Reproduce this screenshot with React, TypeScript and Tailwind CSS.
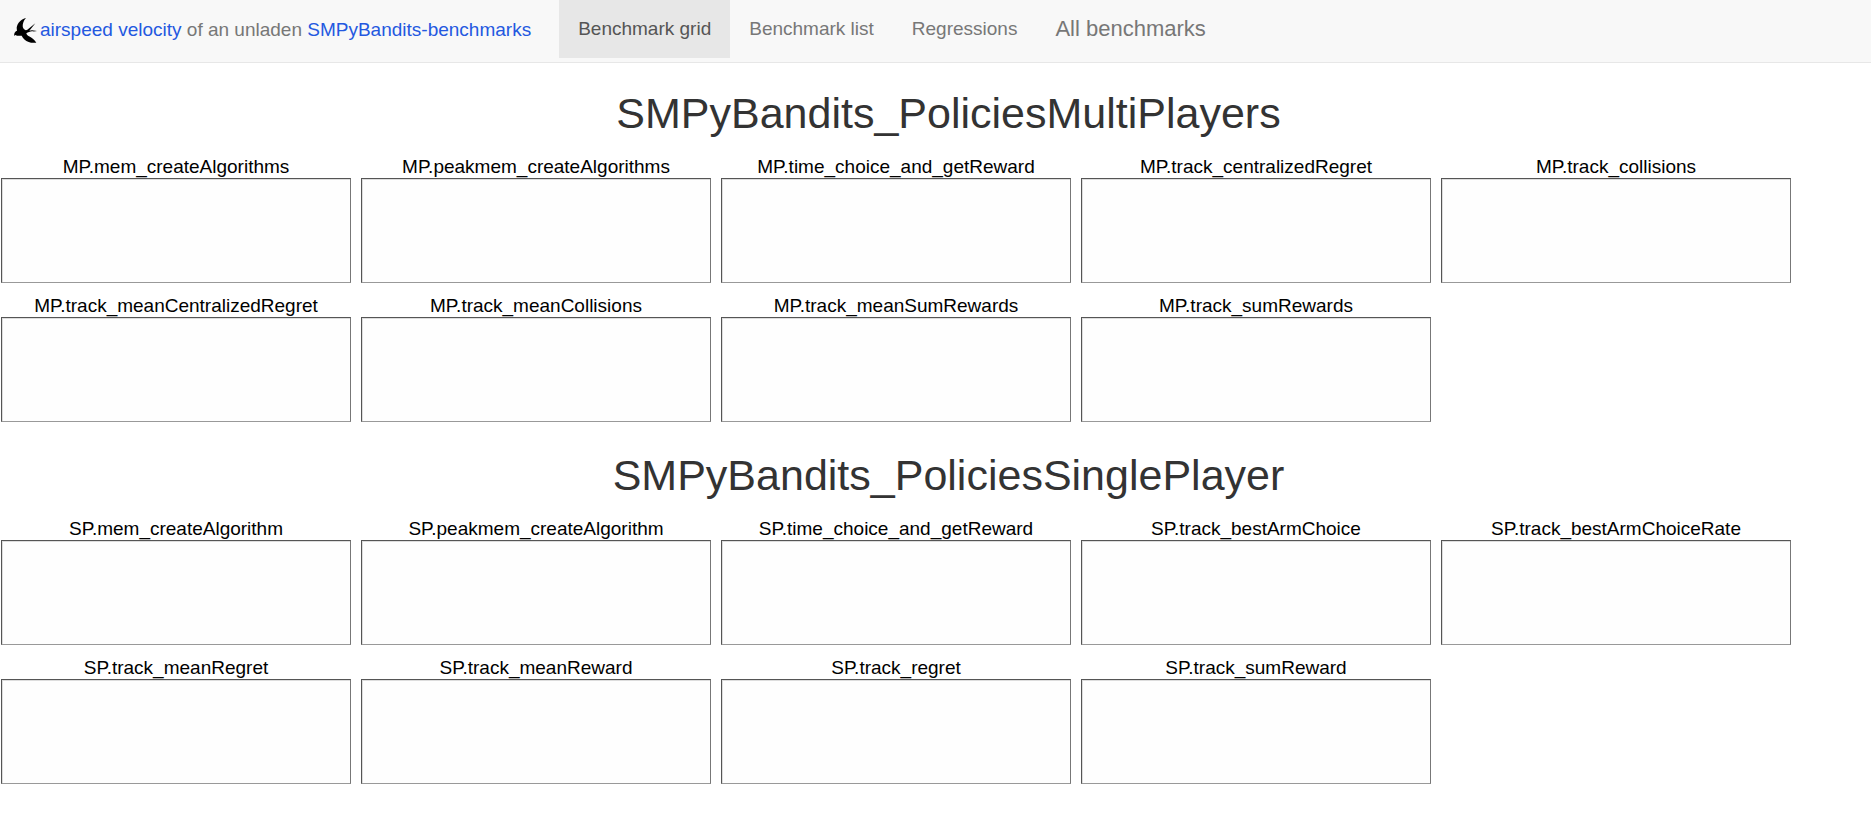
type Group = { title: string; benchmarks: string[] };

const groups: Group[] = [
  {
    title: "SMPyBandits_PoliciesMultiPlayers",
    benchmarks: [
      "MP.mem_createAlgorithms",
      "MP.peakmem_createAlgorithms",
      "MP.time_choice_and_getReward",
      "MP.track_centralizedRegret",
      "MP.track_collisions",
      "MP.track_meanCentralizedRegret",
      "MP.track_meanCollisions",
      "MP.track_meanSumRewards",
      "MP.track_sumRewards",
    ],
  },
  {
    title: "SMPyBandits_PoliciesSinglePlayer",
    benchmarks: [
      "SP.mem_createAlgorithm",
      "SP.peakmem_createAlgorithm",
      "SP.time_choice_and_getReward",
      "SP.track_bestArmChoice",
      "SP.track_bestArmChoiceRate",
      "SP.track_meanRegret",
      "SP.track_meanReward",
      "SP.track_regret",
      "SP.track_sumReward",
    ],
  },
];

function Swallow() {
  return (
    <svg viewBox="0 0 69 75" className="h-[25px] w-[23px] shrink-0" aria-hidden="true">
      <path
        fill="#000"
        d="M36 0C22 3 10 15 8 29C8 33 9 36 9 38C4 40 1 44 1 47L0 53L5 51C9 54 16 54 23 53C27 61 34 69 44 72C51 75 60 75 67 74C62 67 54 59 45 55C41 53 38 50 37 46C42 42 48 41 54 40C60 41 65 40 69 39L54 37L46 38L64 16L40 35C36 38 31 36 28 31C24 24 27 9 36 0Z"
      />
    </svg>
  );
}

function Navbar() {
  return (
    <nav className="flex h-[63px] items-start border-b border-[#e7e7e7] bg-[#f8f8f8] text-[19px] whitespace-nowrap text-[#777]">
      <div className="flex h-[60px] items-center pr-7 pl-3.5">
        <Swallow />
        <p className="pl-[3px]">
          <a href="#asv" className="text-[#2458e0]">airspeed velocity</a> of an unladen{" "}
          <a href="#project" className="text-[#2458e0]">SMPyBandits-benchmarks</a>
        </p>
      </div>
      <ul className="flex leading-[57px]">
        <li><a href="#grid" className="block bg-[#e7e7e7] px-[19px] pb-px text-[#555]">Benchmark grid</a></li>
        <li><a href="#list" className="block px-[19px] pb-px">Benchmark list</a></li>
        <li><a href="#regressions" className="block px-[19px] pb-px">Regressions</a></li>
        <li><a href="#all" className="block px-[19px] pb-px text-[22px]">All benchmarks</a></li>
      </ul>
    </nav>
  );
}

function Benchmark({ name }: { name: string }) {
  return (
    <a href={"#" + name} className="block w-[350px] text-center text-[19px] text-black">
      <span className="block pt-0.5 leading-[22px]">{name}</span>
      <span className="block h-[105px] border border-t-[#555] border-r-[#777] border-b-[#999] border-l-[#555] bg-[#fefefe] shadow-[inset_1px_1px_0_#ddd]" />
    </a>
  );
}

export default function App() {
  return (
    <div className="min-h-screen bg-white font-['Liberation_Sans',Arial,sans-serif]">
      <Navbar />
      <main className="pt-[26px]">
        {groups.map((group) => (
          <section key={group.title} className="mb-[29px]">
            <h1 className="pl-[26px] text-center text-[43px] leading-[48px] text-[#333]">{group.title}</h1>
            <div className="mt-[17px] flex flex-wrap gap-2.5 pl-px">
              {group.benchmarks.map((name) => (
                <Benchmark key={name} name={name} />
              ))}
            </div>
          </section>
        ))}
      </main>
    </div>
  );
}
